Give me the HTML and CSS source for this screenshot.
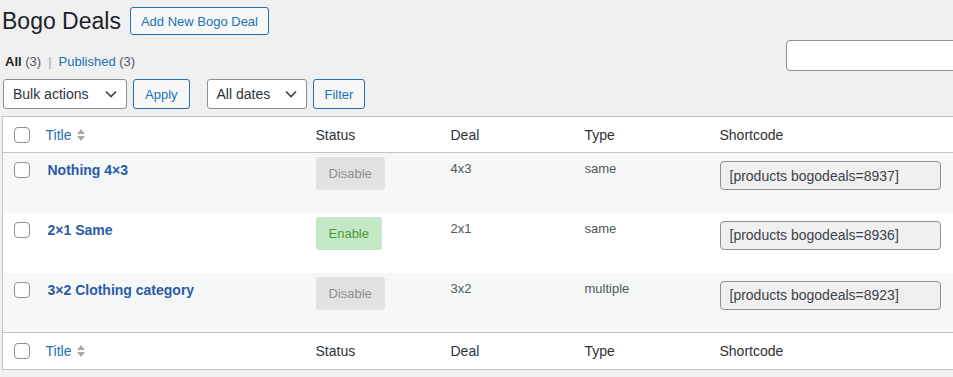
FILE: index.html
```html
<!DOCTYPE html>
<html lang="en">
<head>
  <meta charset="UTF-8" />
  <title>Bogo Deals</title>
  <link rel="stylesheet" href="styles.css">
</head>
<body>
  <div class="wrap">
    <div class="page-head">
      <h1>Bogo Deals</h1>
      <a class="btn" href="#">Add New Bogo Deal</a>
    </div>

    <div class="filters-top">
      <ul class="subsubsub">
        <li><b>All</b> <span class="count">(3)</span></li>
        <li class="sep">|</li>
        <li><a href="#">Published</a> <span class="count">(3)</span></li>
      </ul>
      <input class="search" type="search" />
    </div>

    <div class="tablenav">
      <div class="select wide">Bulk actions
        <svg width="12" height="8" viewBox="0 0 12 8"><polyline points="1,1.5 6,6.5 11,1.5" fill="none" stroke="#3c434a" stroke-width="1.6"/></svg>
      </div>
      <a class="btn small" href="#">Apply</a>
      <div class="select dates">All dates
        <svg width="12" height="8" viewBox="0 0 12 8"><polyline points="1,1.5 6,6.5 11,1.5" fill="none" stroke="#3c434a" stroke-width="1.6"/></svg>
      </div>
      <a class="btn small" href="#">Filter</a>
    </div>

    <table class="list">
      <colgroup>
        <col style="width:35px">
        <col style="width:270px">
        <col style="width:135px">
        <col style="width:134px">
        <col style="width:135px">
        <col>
      </colgroup>
      <thead>
        <tr>
          <th class="cb"><span class="check"></span></th>
          <th><a href="#" class="sort">Title <span class="arrows"><i class="up"></i><i class="down"></i></span></a></th>
          <th>Status</th>
          <th>Deal</th>
          <th>Type</th>
          <th>Shortcode</th>
        </tr>
      </thead>
      <tbody>
        <tr class="alt">
          <td class="cb"><span class="check"></span></td>
          <td><a href="#" class="row-title">Nothing 4×3</a></td>
          <td><span class="status off">Disable</span></td>
          <td>4x3</td>
          <td>same</td>
          <td><input class="code" type="text" value="[products bogodeals=8937]" readonly /></td>
        </tr>
        <tr>
          <td class="cb"><span class="check"></span></td>
          <td><a href="#" class="row-title">2×1 Same</a></td>
          <td><span class="status on">Enable</span></td>
          <td>2x1</td>
          <td>same</td>
          <td><input class="code" type="text" value="[products bogodeals=8936]" readonly /></td>
        </tr>
        <tr class="alt">
          <td class="cb"><span class="check"></span></td>
          <td><a href="#" class="row-title">3×2 Clothing category</a></td>
          <td><span class="status off">Disable</span></td>
          <td>3x2</td>
          <td>multiple</td>
          <td><input class="code" type="text" value="[products bogodeals=8923]" readonly /></td>
        </tr>
      </tbody>
      <tfoot>
        <tr>
          <th class="cb"><span class="check"></span></th>
          <th><a href="#" class="sort">Title <span class="arrows"><i class="up"></i><i class="down"></i></span></a></th>
          <th>Status</th>
          <th>Deal</th>
          <th>Type</th>
          <th>Shortcode</th>
        </tr>
      </tfoot>
    </table>
  </div>
</body>
</html>
```

FILE: styles.css
```css
html, body {
  margin: 0;
  padding: 0;
  overflow: hidden;
  background: #f0f0f1;
  color: #3c434a;
  font-family: "Liberation Sans", Arial, sans-serif;
  font-size: 13px;
}
a {
  color: #2271b1;
  text-decoration: none;
}
.wrap {
  width: 1010px;
  margin-left: 2px;
}
.page-head {
  display: flex;
  align-items: center;
  gap: 9px;
  padding-top: 7px;
}
h1 {
  margin: 0;
  font-size: 23px;
  font-weight: 400;
  color: #1d2327;
  line-height: 28px;
}
.btn {
  display: inline-flex;
  align-items: center;
  height: 26px;
  padding: 0 10px;
  border: 1px solid #2271b1;
  border-radius: 3px;
  background: #f6f7f7;
  color: #2271b1;
  font-size: 13px;
}
.btn.small {
  height: 28px;
  padding: 0 11px;
}
.filters-top {
  display: flex;
  justify-content: space-between;
  align-items: flex-start;
  margin-top: 5px;
}
.subsubsub {
  display: flex;
  gap: 5px;
  list-style: none;
  margin: 14px 0 0 3px;
  padding: 0;
  color: #1d2327;
}
.subsubsub .count {
  color: #50575e;
}
.subsubsub .sep {
  color: #a7aaad;
  padding: 0 2px;
}
.search {
  width: 226px;
  height: 31px;
  box-sizing: border-box;
  border: 1px solid #8c8f94;
  border-radius: 4px;
  background: #fff;
}
.tablenav {
  display: flex;
  align-items: center;
  gap: 6px;
  margin-top: 8px;
  height: 30px;
}
.select {
  display: flex;
  align-items: center;
  justify-content: space-between;
  box-sizing: border-box;
  height: 30px;
  padding: 0 9px;
  border: 1px solid #8c8f94;
  border-radius: 3px;
  background: #fff;
  font-size: 14px;
  color: #2c3338;
}
.select.wide {
  width: 124px;
  margin-left: 1px;
}
.select.dates {
  width: 100px;
  margin-left: 11px;
}
.list {
  margin-top: 7px;
  width: 1000px;
  table-layout: fixed;
  border-collapse: collapse;
  border: 1px solid #c3c4c7;
  background: #fff;
  font-size: 13px;
}
.list th {
  text-align: left;
  font-weight: 400;
  font-size: 14px;
  color: #2c3338;
  height: 35px;
  padding: 0 8px;
}
.list thead th {
  border-bottom: 1px solid #c3c4c7;
}
.list tfoot th {
  border-top: 1px solid #c3c4c7;
  height: 36px;
}
.list td {
  vertical-align: top;
  height: 60px;
  padding: 8px 8px 0;
  box-sizing: border-box;
  color: #50575e;
}
.list tr.alt td {
  background: #f6f7f7;
}
.list .cb {
  padding: 0 0 0 11px;
}
.list td.cb {
  padding-top: 9px;
}
.check {
  display: block;
  width: 14px;
  height: 14px;
  border: 1px solid #8c8f94;
  border-radius: 4px;
  background: #fff;
}
.sort {
  display: inline-flex;
  align-items: center;
  gap: 6px;
}
.arrows {
  display: inline-flex;
  flex-direction: column;
  gap: 2px;
}
.arrows i {
  display: block;
  width: 0;
  height: 0;
  border-left: 4px solid transparent;
  border-right: 4px solid transparent;
}
.arrows .up {
  border-bottom: 5px solid #a7aaad;
}
.arrows .down {
  border-top: 5px solid #a7aaad;
}
.row-title {
  display: block;
  margin: 1px 0 0 2px;
  font-size: 14px;
  font-weight: 700;
  color: #2a5ba6;
}
.status {
  display: inline-block;
  margin-top: -4px;
  padding: 0 13px;
  height: 33px;
  line-height: 33px;
  border-radius: 3px;
  font-size: 13px;
}
.status.off {
  background: #e2e2e2;
  color: #8c8f94;
}
.status.on {
  background: #c4e8c5;
  color: #4a9a3a;
}
.code {
  display: block;
  width: 221px;
  height: 29px;
  box-sizing: border-box;
  padding: 0 9px;
  border: 1px solid #8c8f94;
  border-radius: 4px;
  background: #f0f0f1;
  color: #3c434a;
  font-family: inherit;
  font-size: 14px;
}
```
